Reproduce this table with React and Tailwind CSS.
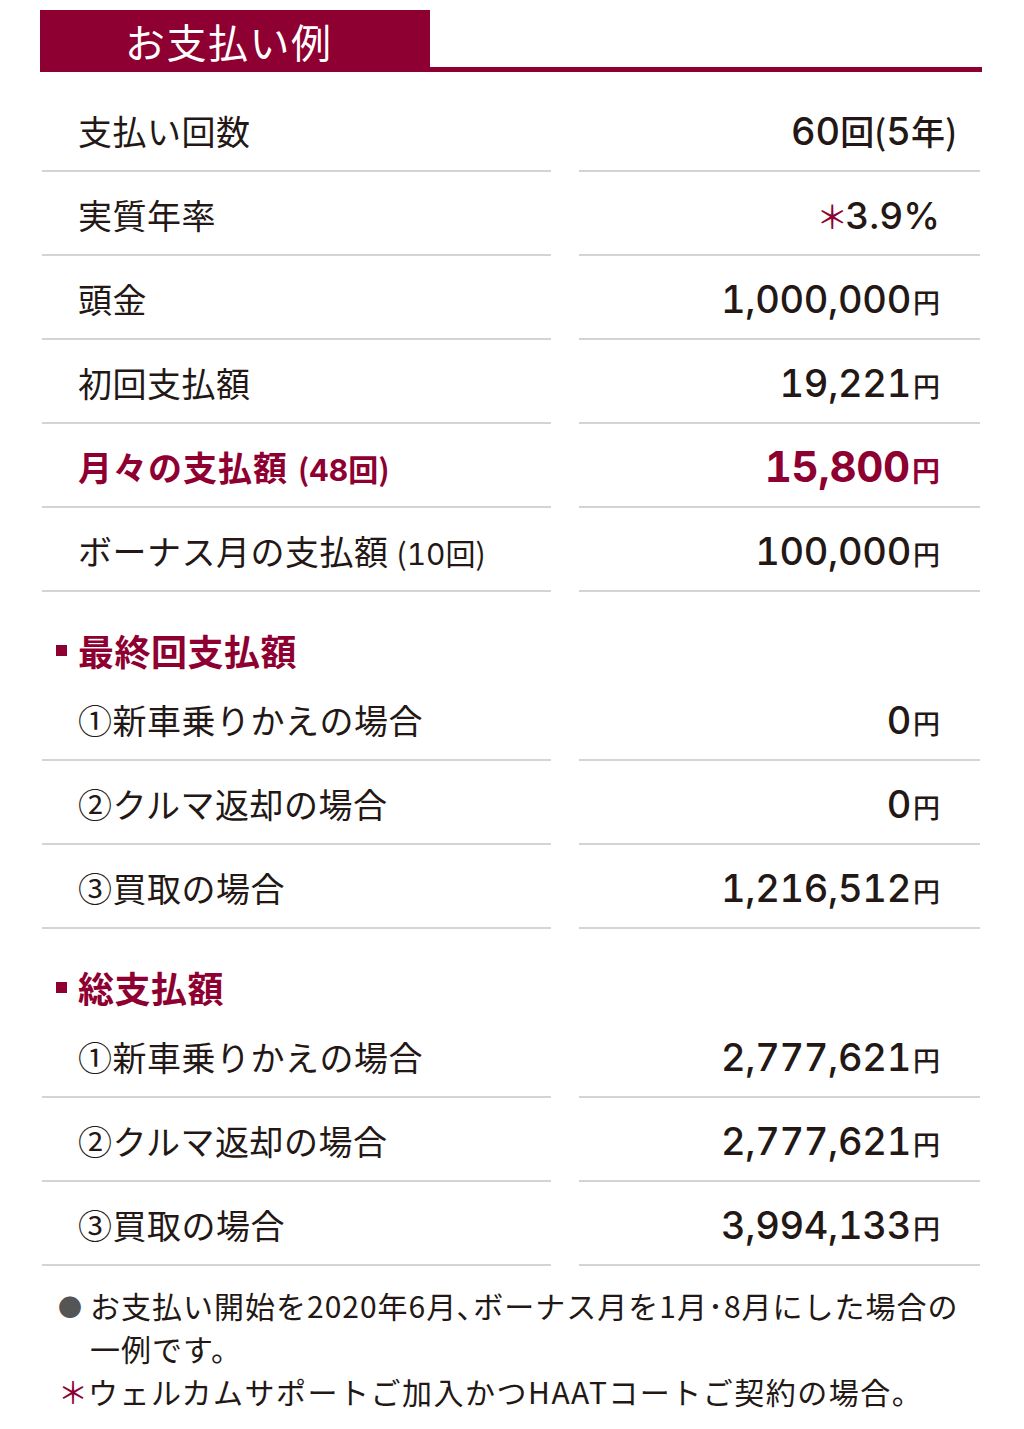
import React from "react";

const JP = "font-['Noto_Sans_CJK_JP','Noto_Sans',sans-serif]";
const NUM = "font-['Inter','Noto_Sans_CJK_JP',sans-serif] tabular-nums";

function Row({ label, value, red }) {
  return (
    <>
      <div className={`h-[84px] flex items-center pt-[4px] pl-[36px] border-b-2 border-[#d4d4d4] ${red ? "text-[#8e0031]" : "text-[#231815]"}`}>
        {label}
      </div>
      <div className={`h-[84px] flex items-center justify-end pt-[4px] pr-[40px] border-b-2 border-[#d4d4d4] ${red ? "text-[#8e0031]" : "text-[#231815]"}`}>
        {value}
      </div>
    </>
  );
}

function Yen({ n, big }) {
  return (
    <span className="flex items-baseline">
      <span className={`${NUM} ${big ? "text-[42px] font-bold" : "text-[38px] font-medium"} leading-none tracking-[-0.3px]`}>{n}</span>
      <span className={`${JP} ${big ? "text-[28px] font-bold" : "text-[27px] font-medium"} leading-none ml-[2px]`}>円</span>
    </span>
  );
}

function L({ children }) {
  return <span className={`${JP} text-[34px] leading-none tracking-[0.5px]`}>{children}</span>;
}

function Section({ title }) {
  return (
    <div className="col-span-2 pt-[36px] pb-[5px] flex items-center h-[85px]">
      <span className="w-[11px] h-[11px] bg-[#8e0031] ml-[14px] mr-[11px]" />
      <span className={`${JP} text-[36px] leading-[44px] font-bold text-[#8e0031] tracking-[0.5px]`}>{title}</span>
    </div>
  );
}

export default function App() {
  return (
    <div className="w-[1024px] min-h-[1429px] bg-white">
      <div className="pt-[10px] ml-[40px] w-[942px] flex items-end">
        <div className="w-[390px] h-[62px] bg-[#8e0031] flex items-center pl-[85px]">
          <span className={`${JP} text-white text-[40px] leading-none tracking-[1.5px]`}>お支払い例</span>
        </div>
        <div className="flex-1 h-[5px] bg-[#8e0031]" />
      </div>

      <div className="ml-[42px] mt-[16px] grid grid-cols-[509px_401px] gap-x-[28px]">
        <Row label={<L>支払い回数</L>} value={
          <span className="flex items-baseline mr-[-17px]">
            <span className={`${NUM} text-[38px] font-medium leading-none`}>60</span>
            <span className={`${JP} text-[34px] font-medium leading-none`}>回(</span>
            <span className={`${NUM} text-[38px] font-medium leading-none`}>5</span>
            <span className={`${JP} text-[34px] font-medium leading-none`}>年)</span>
          </span>
        } />
        <Row label={<L>実質年率</L>} value={
          <span className="flex items-baseline mr-[0px]">
            <span className={`${JP} text-[32px] leading-none text-[#8e0031]`}>＊</span>
            <span className={`${NUM} text-[37px] font-medium leading-none ml-[-3px]`}>3.9%</span>
          </span>
        } />
        <Row label={<L>頭金</L>} value={<Yen n="1,000,000" />} />
        <Row label={<L>初回支払額</L>} value={<Yen n="19,221" />} />
        <Row red label={
          <span className="flex items-baseline">
            <span className={`${JP} text-[34px] font-bold leading-none tracking-[1px]`}>月々の支払額</span>
            <span className={`${JP} text-[30px] font-bold leading-none ml-[10px]`}>(</span>
            <span className={`${NUM} text-[30px] font-bold leading-none`}>48</span>
            <span className={`${JP} text-[30px] font-bold leading-none`}>回)</span>
          </span>
        } value={<Yen n="15,800" big />} />
        <Row label={
          <span className="flex items-baseline">
            <span className={`${JP} text-[34px] leading-none tracking-[0.5px]`}>ボーナス月の支払額</span>
            <span className={`${JP} text-[30px] leading-none ml-[8px]`}>(</span>
            <span className={`${NUM} text-[30px] leading-none`}>10</span>
            <span className={`${JP} text-[30px] leading-none`}>回)</span>
          </span>
        } value={<Yen n="100,000" />} />

        <Section title="最終回支払額" />
        <Row label={<L>①新車乗りかえの場合</L>} value={<Yen n="0" />} />
        <Row label={<L>②クルマ返却の場合</L>} value={<Yen n="0" />} />
        <Row label={<L>③買取の場合</L>} value={<Yen n="1,216,512" />} />

        <Section title="総支払額" />
        <Row label={<L>①新車乗りかえの場合</L>} value={<Yen n="2,777,621" />} />
        <Row label={<L>②クルマ返却の場合</L>} value={<Yen n="2,777,621" />} />
        <Row label={<L>③買取の場合</L>} value={<Yen n="3,994,133" />} />
      </div>

      <div className={`${JP} mt-[18px] ml-[58px] w-[950px] text-[30px] leading-[43px] text-[#231815]`}>
        <div className="flex">
          <span className="w-[32px] shrink-0 text-[#555] text-[24px]">●</span>
          <span className="whitespace-nowrap tracking-[1px]">
            お支払い開始を2020年6月､ボーナス月を1月･8月にした場合の<br />一例です。
          </span>
        </div>
        <div className="flex">
          <span className="w-[30px] shrink-0 text-[#8e0031]">＊</span>
          <span className="whitespace-nowrap tracking-[1.5px]">ウェルカムサポートご加入かつHAATコートご契約の場合。</span>
        </div>
      </div>
    </div>
  );
}
